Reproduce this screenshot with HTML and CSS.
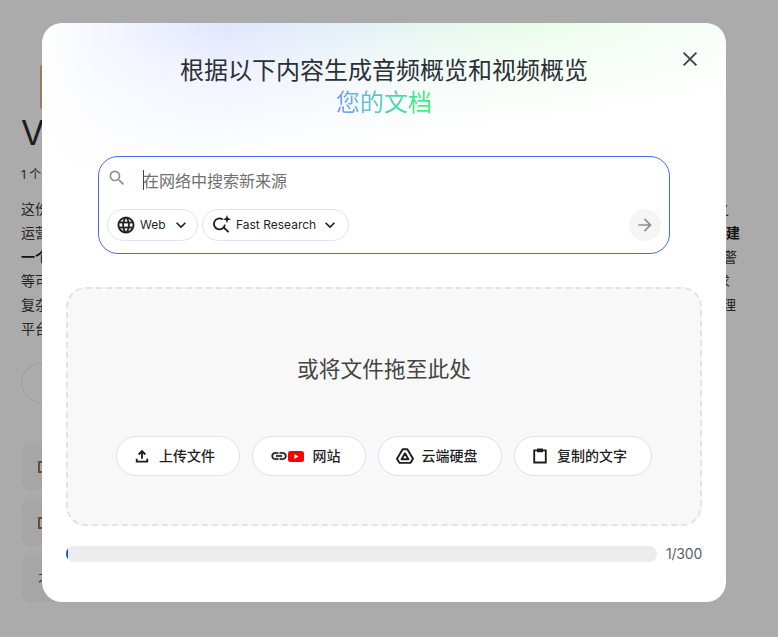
FILE: index.html
```html
<!DOCTYPE html>
<html lang="zh-CN">
<head>
<meta charset="utf-8">
<title>添加来源</title>
<link rel="stylesheet" href="styles.css">
</head>
<body>
<main class="page">
  <div class="page-logo"></div>
  <h1 class="page-title">V</h1>
  <p class="page-meta">1 个来源</p>
  <div class="page-text">
    <div class="line"><span>这份</span><span class="end1">之</span></div>
    <div class="line"><span>运营</span><span class="end2 strong">建</span></div>
    <div class="line"><span class="strong">一个</span><span class="end3">警</span></div>
    <div class="line"><span>等可</span><span class="end4">求</span></div>
    <div class="line"><span>复杂</span><span class="end5">理</span></div>
    <div class="line"><span>平台</span></div>
  </div>
  <div class="page-pill"></div>
  <div class="page-cards">
    <div class="page-card"><span class="card-icon"></span></div>
    <div class="page-card"><span class="card-icon"></span></div>
    <div class="page-card"><span class="card-glyph">不</span></div>
  </div>
</main>

<section class="modal">
  <button class="close" aria-label="关闭">
    <svg width="24" height="24" viewBox="0 0 24 24"><path d="M5.6 5.6l12.8 12.8M18.4 5.6L5.6 18.4" fill="none" stroke="#37474f" stroke-width="1.9"/></svg>
  </button>
  <h2 class="title">根据以下内容生成音频概览和视频概览<br><span class="title-accent">您的文档</span></h2>

  <div class="search">
    <div class="search-top">
      <svg class="search-icon" width="20" height="20" viewBox="0 0 24 24"><path fill="#8f8f8f" d="M15.5 14h-.79l-.28-.27A6.47 6.47 0 0 0 16 9.5 6.5 6.5 0 1 0 9.5 16c1.61 0 3.09-.59 4.23-1.57l.27.28v.79l5 4.99L20.49 19l-4.99-5zm-6 0C7.01 14 5 11.99 5 9.5S7.01 5 9.5 5 14 7.01 14 9.5 11.99 14 9.5 14z"/></svg>
      <span class="caret"></span>
      <span class="placeholder">在网络中搜索新来源</span>
    </div>
    <div class="search-bottom">
      <button class="chip chip-web">
        <svg width="20" height="20" viewBox="0 0 24 24"><path fill="#1f1f1f" stroke="#1f1f1f" stroke-width=".25" d="M11.99 2C6.47 2 2 6.48 2 12s4.47 10 9.99 10C17.52 22 22 17.52 22 12S17.52 2 11.99 2zm6.93 6h-2.95a15.65 15.65 0 0 0-1.38-3.56A8.03 8.03 0 0 1 18.92 8zM12 4.04c.83 1.2 1.48 2.53 1.91 3.96h-3.82c.43-1.43 1.08-2.76 1.91-3.96zM4.26 14C4.1 13.36 4 12.69 4 12s.1-1.36.26-2h3.38c-.08.66-.14 1.32-.14 2s.06 1.34.14 2H4.26zm.82 2h2.95c.32 1.25.78 2.45 1.38 3.56A7.987 7.987 0 0 1 5.08 16zm2.95-8H5.08a7.987 7.987 0 0 1 4.33-3.56A15.65 15.65 0 0 0 8.03 8zM12 19.96c-.83-1.2-1.48-2.53-1.91-3.96h3.82c-.43 1.43-1.08 2.76-1.91 3.96zM14.34 14H9.66c-.09-.66-.16-1.32-.16-2s.07-1.35.16-2h4.68c.09.65.16 1.32.16 2s-.07 1.34-.16 2zm.25 5.56c.6-1.11 1.06-2.31 1.38-3.56h2.95a8.03 8.03 0 0 1-4.33 3.56zM16.36 14c.08-.66.14-1.32.14-2s-.06-1.34-.14-2h3.38c.16.64.26 1.31.26 2s-.1 1.36-.26 2h-3.38z"/></svg>
        <span class="chip-label">Web</span>
        <svg class="chev" width="20" height="20" viewBox="0 0 24 24"><path fill="#1f1f1f" d="M16.59 8.59 12 13.17 7.41 8.59 6 10l6 6 6-6z"/></svg>
      </button>
      <button class="chip chip-fast">
        <svg width="20" height="20" viewBox="0 0 24 24"><path fill="none" stroke="#1f1f1f" stroke-width="2.2" d="M12.8 5.3A6.6 6.6 0 1 0 15.5 11.500M14 15l6 5.500"/><path fill="#1f1f1f" d="M18 0l1.300 3.700L23 5l-3.700 1.300L18 10l-1.300-3.700L13 5l3.700-1.300z"/></svg>
        <span class="chip-label">Fast Research</span>
        <svg width="20" height="20" viewBox="0 0 24 24"><path fill="#1f1f1f" d="M16.59 8.59 12 13.17 7.41 8.59 6 10l6 6 6-6z"/></svg>
      </button>
      <button class="send" aria-label="提交">
        <svg width="20" height="20" viewBox="0 0 24 24"><path fill="#8e8e8e" d="M12 4l-1.41 1.41L16.17 11H4v2h12.17l-5.58 5.59L12 20l8-8z"/></svg>
      </button>
    </div>
  </div>

  <div class="drop">
    <p class="drop-text">或将文件拖至此处</p>
    <div class="actions">
      <button class="action action-upload">
        <svg width="18" height="18" viewBox="0 0 24 24"><path fill="none" stroke="#1f1f1f" stroke-width="2.5" d="M12 15.5V6M7.5 10L12 5.500 16.500 10M5 15.500v4h14v-4" /></svg>
        <span class="action-label">上传文件</span>
      </button>
      <button class="action action-site">
        <span class="icon-pair">
          <svg width="18" height="18" viewBox="0 0 24 24"><path fill="#1f1f1f" stroke="#1f1f1f" stroke-width=".5" d="M3.9 12c0-1.71 1.39-3.1 3.1-3.1h4V7H7c-2.76 0-5 2.24-5 5s2.24 5 5 5h4v-1.900H7c-1.71 0-3.100-1.390-3.100-3.100zM8 13h8v-2H8v2zm9-6h-4v1.900h4c1.710 0 3.100 1.390 3.100 3.100s-1.390 3.100-3.100 3.100h-4V17h4c2.760 0 5-2.240 5-5s-2.240-5-5-5z"/></svg>
          <svg width="16" height="11" viewBox="0 0 16 11"><rect width="16" height="11" rx="2.5" fill="#ff0000"/><path d="M6.4 3l4 2.500-4 2.500z" fill="#fff"/></svg>
        </span>
        <span class="action-label">网站</span>
      </button>
      <button class="action action-drive">
        <svg width="20" height="20" viewBox="0 0 24 24"><path fill="none" stroke="#1f1f1f" stroke-width="2.3" stroke-linejoin="round" d="M9.200 3.800h5.600L21.600 15.400 18.800 20.200H5.200L2.400 15.400zM12 8.800l4.100 7h-8.200z"/></svg>
        <span class="action-label">云端硬盘</span>
      </button>
      <button class="action action-copy">
        <svg width="18" height="18" viewBox="0 0 24 24"><path fill="none" stroke="#1f1f1f" stroke-width="2.5" d="M8 4.500H4.300v16.200h15.400V4.500h-3.700"/><path fill="#1f1f1f" d="M8 2h8v5H8z"/></svg>
        <span class="action-label">复制的文字</span>
      </button>
    </div>
  </div>

  <div class="progress">
    <div class="track"><div class="fill" style="width:0.34%"></div></div>
    <span class="count">1/300</span>
  </div>
</section>
</body>
</html>
```
FILE: styles.css
```css
* { box-sizing: border-box; }
html, body { margin: 0; height: 100%; }
body {
  background: #ababab;
  font-family: "Inter", "Noto Sans CJK SC", sans-serif;
  overflow: hidden;
  color: #1c1c1c;
}
button { font: inherit; color: inherit; cursor: pointer; }

/* dimmed page behind the dialog */
.page { width: 741px; padding: 64px 0 0 21px; }
.page-logo { width: 46px; height: 46px; margin-left: 19px; background: #a3755f; border-radius: 4px; }
.page-title { margin: 1px 0 0; font: 400 34px/44px "Inter", sans-serif; }
.page-meta { margin: 11px 0 0; font: 400 12px/18px "Inter", "Noto Sans CJK SC", sans-serif; color: #20242c; }
.page-text { margin-top: 12px; font: 400 14px/24px "Noto Sans CJK SC", sans-serif; color: #262626; }
.line { display: flex; justify-content: space-between; }
.strong { font-weight: 700; color: #111; }
.end1 { margin-right: 12px; }
.end2 { margin-right: 1px; }
.end3 { margin-right: 4px; }
.end4 { margin-right: 11px; }
.end5 { margin-right: 5px; }
.page-pill { width: 90px; height: 40px; margin-top: 23px; border: 1px solid #9c9ca2; border-radius: 20px; }
.page-cards { display: flex; flex-direction: column; gap: 9px; margin-top: 40px; }
.page-card { display: flex; align-items: center; width: 200px; height: 47px; padding-left: 17px; background: #a6a6a6; border-radius: 12px; }
.card-icon { width: 12px; height: 12px; border: 2px solid #6b4a38; }
.card-glyph { font: 400 14px/20px "Noto Sans CJK SC", sans-serif; color: #2a3a50; }

/* dialog */
.modal {
  position: absolute;
  left: 42px;
  top: 23px;
  width: 684px;
  height: 579px;
  padding: 30px 24px 0;
  border-radius: 20px;
  display: flex;
  flex-direction: column;
  align-items: center;
  background:
    linear-gradient(173deg, rgba(255,255,255,0) 25px, rgba(255,255,255,.55) 80px, #fff 160px),
    linear-gradient(90deg, #fff 0, #e1e6fe 27%, #dff0f3 50%, #dcfbdc 72%, #eefcf0 100%);
  background-repeat: no-repeat;
}
.close {
  position: absolute;
  right: 24px;
  top: 24px;
  width: 24px;
  height: 24px;
  padding: 0;
  border: 0;
  background: none;
  display: flex;
}
.title {
  margin: 0;
  font: 400 24px/32px "Noto Sans CJK SC", sans-serif;
  color: #2b2f36;
  text-align: center;
}
.title-accent {
  background: linear-gradient(90deg, #7c9af8 0, #56c9c0 45%, #3cf26f 100%);
  -webkit-background-clip: text;
  background-clip: text;
  color: transparent;
}

.search {
  width: 572px;
  height: 98px;
  margin-top: 39px;
  padding: 7px 8px 12px;
  border: 1px solid #4a66f0;
  border-radius: 20px;
  background: #fff;
  display: flex;
  flex-direction: column;
  justify-content: space-between;
}
.search-top { display: flex; align-items: center; height: 32px; }
.search-icon { flex: none; margin-top: -4px; }
.caret { width: 1px; height: 20px; margin: 0 0 0 16px; background: #2443a0; }
.placeholder { margin-left: -1px; font: 400 16px/24px "Noto Sans CJK SC", sans-serif; color: #6f6f6f; }
.search-bottom { display: flex; align-items: center; gap: 4px; }
.chip {
  display: flex;
  align-items: center;
  height: 32px;
  border: 1px solid #e0e2f0;
  border-radius: 16px;
  background: #fff;
  font-size: 12px;
  font-family: "Inter", sans-serif;
  color: #1f1f1f;
  padding: 0 0 0 8px;
  gap: 4px;
  white-space: nowrap;
}
.chip-web { width: 91px; }
.chip-fast { width: 147px; padding-left: 9px; }
.chip-label { margin-top: -2px; }
.chev { margin-left: 1px; }
.send {
  width: 32px;
  height: 32px;
  margin-left: auto;
  padding: 0;
  border: 0;
  border-radius: 50%;
  background: #f5f5f5;
  display: flex;
  align-items: center;
  justify-content: center;
}

.drop {
  width: 636px;
  height: 239px;
  margin-top: 33px;
  border: 2px dashed #e0e2f0;
  border-radius: 20px;
  background: #f8f8f8;
  display: flex;
  flex-direction: column;
  align-items: center;
}
.drop-text { margin: 62px 0 0; font: 400 21.75px/34px "Noto Sans CJK SC", sans-serif; color: #444; }
.actions { display: flex; gap: 12px; margin-top: 51px; }
.action {
  display: flex;
  align-items: center;
  justify-content: center;
  gap: 8px;
  height: 40px;
  border: 1px solid #e0e2f0;
  border-radius: 20px;
  background: #fff;
  font: 500 14px/20px "Noto Sans CJK SC", sans-serif;
  color: #1f1f1f;
  padding: 0 8px 0 0;
}
.action-label { margin-top: -2px; }
.action-upload { width: 124px; }
.action-site { width: 114px; }
.action-drive { width: 124px; gap: 7px; }
.action-copy { width: 138px; }
.icon-pair { display: flex; align-items: center; margin-right: 1px; }

.progress { display: flex; align-items: center; gap: 9px; width: 636px; height: 16px; margin-top: 20px; }
.track { flex: 1; height: 16px; border-radius: 8px; background: #ececec; overflow: hidden; }
.fill { height: 100%; background: #0b57d0; }
.count { width: 36px; white-space: nowrap; letter-spacing: -.2px; font: 400 14px/18px "Inter", sans-serif; color: #5a5f66; }
```
